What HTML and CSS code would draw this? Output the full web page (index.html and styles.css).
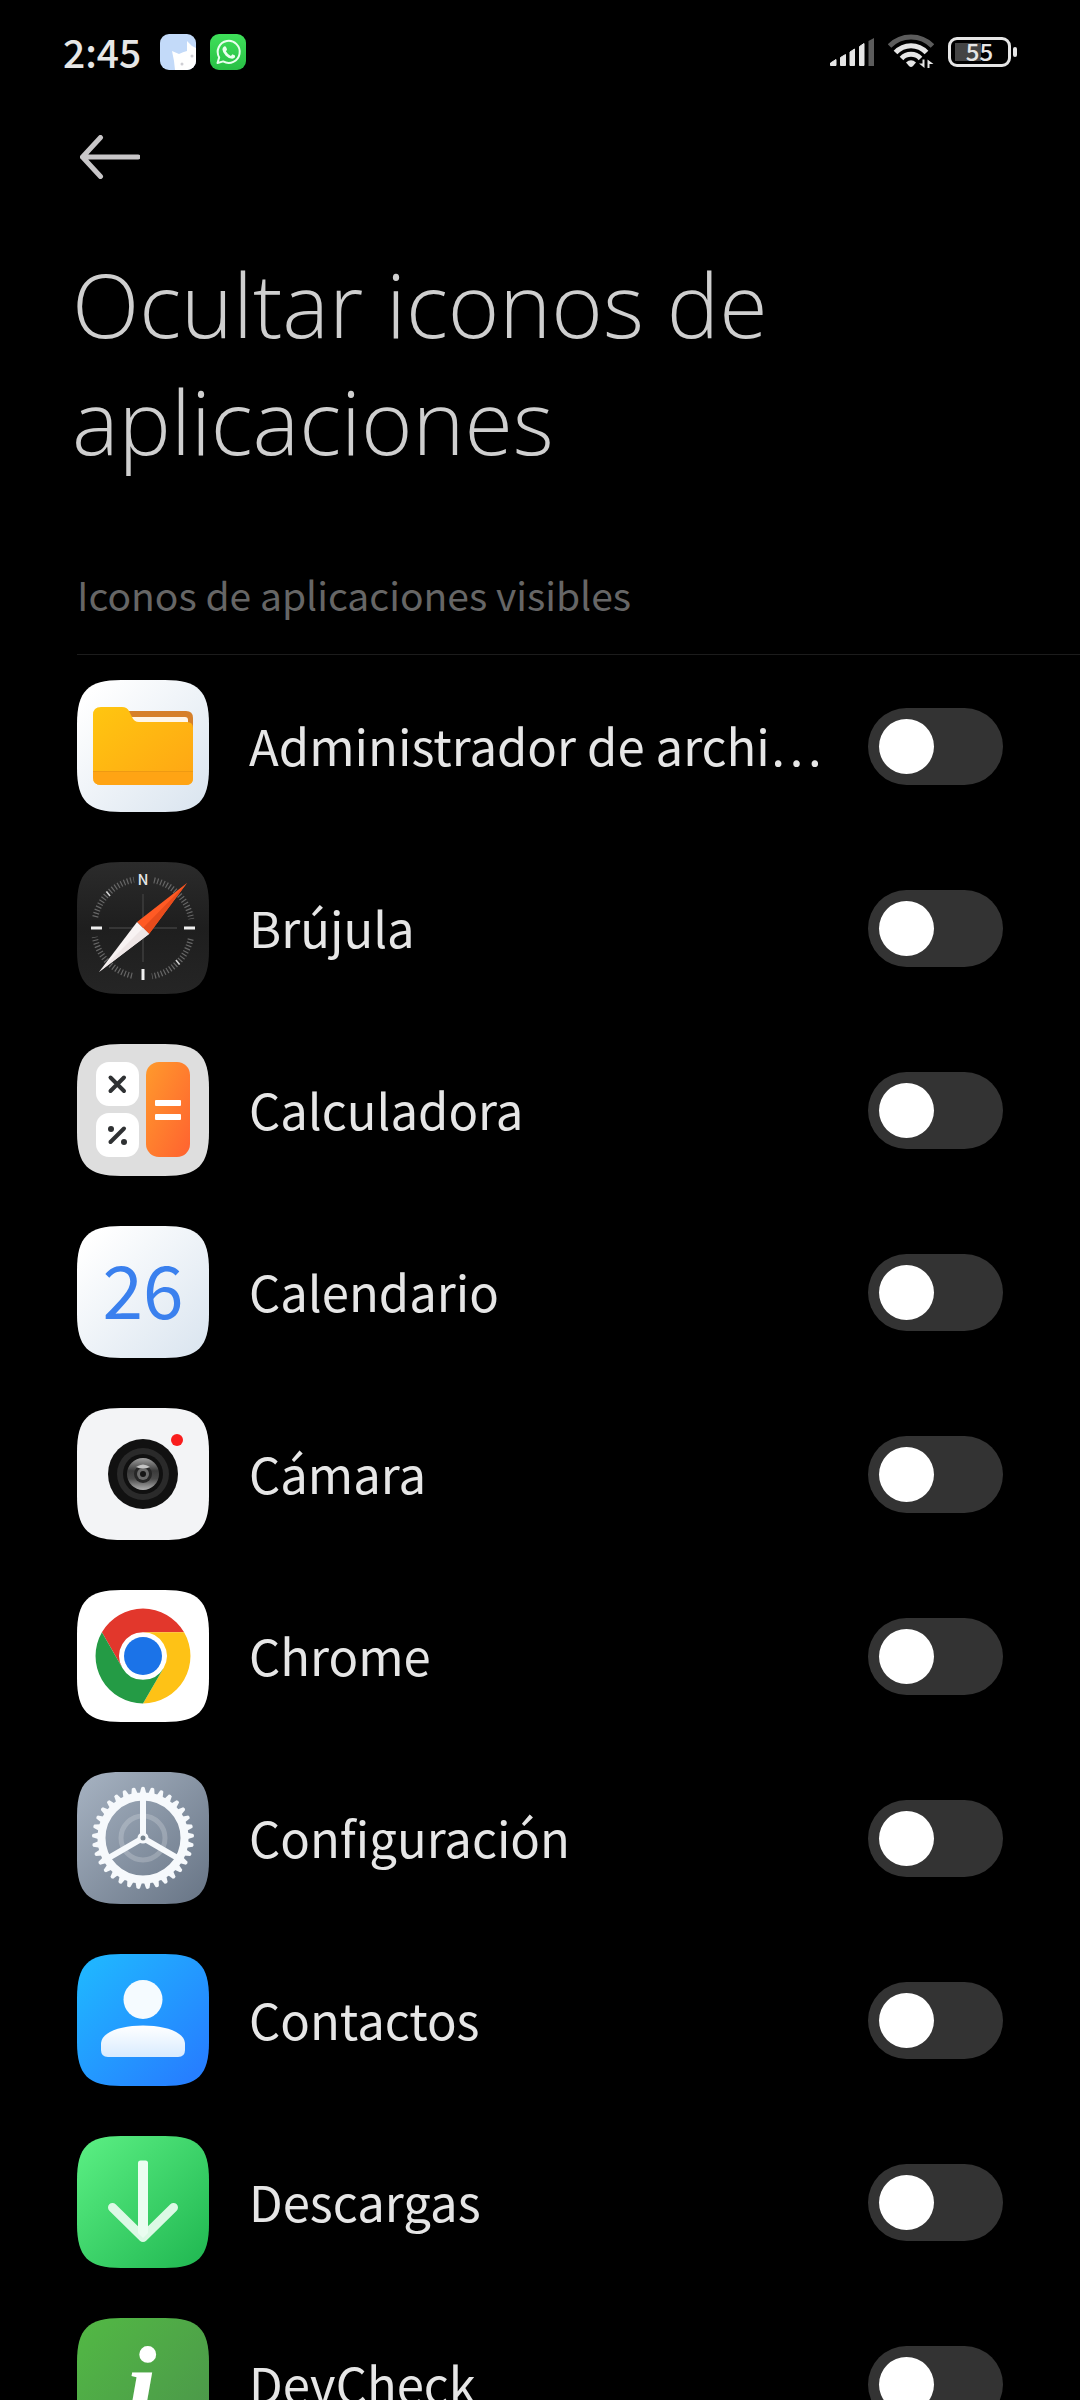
FILE: index.html
```html
<!DOCTYPE html>
<html lang="es">
<head>
    <meta charset="UTF-8">
    <meta name="viewport" content="width=device-width, initial-scale=1.0">
    <title>Ocultar iconos de aplicaciones</title>
    <link rel="stylesheet" href="styles.css">
</head>
<body>
    <!-- shared shapes -->
    <svg class="defs" width="0" height="0" aria-hidden="true">
        <defs>
            <path id="tile" d="M0 44C0 11 11 0 44 0H88C121 0 132 11 132 44V88C132 121 121 132 88 132H44C11 132 0 121 0 88Z"/>
            <linearGradient id="g-light" x1="0" y1="0" x2="1" y2="1">
                <stop offset="0.1" stop-color="#ffffff"/>
                <stop offset="1" stop-color="#d9e4ef"/>
            </linearGradient>
            <linearGradient id="g-folder" x1="0" y1="0" x2="1" y2="1">
                <stop offset="0" stop-color="#ffc610"/>
                <stop offset="1" stop-color="#ffa514"/>
            </linearGradient>
            <linearGradient id="g-dark" x1="0" y1="0" x2="0" y2="1">
                <stop offset="0" stop-color="#2b2b2b"/>
                <stop offset="0.5" stop-color="#1e1e1e"/>
                <stop offset="1" stop-color="#252525"/>
            </linearGradient>
            <linearGradient id="g-orange" x1="0" y1="0" x2="1" y2="1">
                <stop offset="0" stop-color="#ff9a2c"/>
                <stop offset="1" stop-color="#ff6230"/>
            </linearGradient>
            <linearGradient id="g-gray" x1="0" y1="0" x2="1" y2="1">
                <stop offset="0" stop-color="#a7b3c2"/>
                <stop offset="1" stop-color="#677485"/>
            </linearGradient>
            <linearGradient id="g-blue" x1="0" y1="0" x2="1" y2="1">
                <stop offset="0.1" stop-color="#20b4ff"/>
                <stop offset="0.9" stop-color="#267fff"/>
            </linearGradient>
            <linearGradient id="g-green" x1="0" y1="0" x2="1" y2="1">
                <stop offset="0" stop-color="#5cf084"/>
                <stop offset="1" stop-color="#1fb650"/>
            </linearGradient>
            <linearGradient id="g-dev" x1="0" y1="0" x2="1" y2="1">
                <stop offset="0" stop-color="#52b944"/>
                <stop offset="1" stop-color="#4b934b"/>
            </linearGradient>
            <linearGradient id="g-white" x1="0" y1="0" x2="0" y2="1">
                <stop offset="0" stop-color="#ffffff"/>
                <stop offset="1" stop-color="#d8ebff"/>
            </linearGradient>
            <linearGradient id="g-lens" x1="0" y1="0" x2="0" y2="1">
                <stop offset="0" stop-color="#a0a0a0"/>
                <stop offset="0.4" stop-color="#3a3a3a"/>
                <stop offset="0.65" stop-color="#4a4a4a"/>
                <stop offset="1" stop-color="#b0b0b0"/>
            </linearGradient>
            <linearGradient id="g-wa" x1="0" y1="0" x2="0" y2="1">
                <stop offset="0" stop-color="#3fe05a"/>
                <stop offset="1" stop-color="#28bf45"/>
            </linearGradient>
            <clipPath id="clip-note"><rect width="36" height="36" rx="9"/></clipPath>
            <path id="tooth" d="M62.600 22L64.300 15.500Q66 14.200 67.700 15.500L69.400 22Z"/>
            <g id="teeth">
                <use href="#tooth"/>
                <use href="#tooth" transform="rotate(10.909 66 66)"/>
                <use href="#tooth" transform="rotate(21.818 66 66)"/>
                <use href="#tooth" transform="rotate(32.727 66 66)"/>
                <use href="#tooth" transform="rotate(43.636 66 66)"/>
                <use href="#tooth" transform="rotate(54.545 66 66)"/>
                <use href="#tooth" transform="rotate(65.455 66 66)"/>
                <use href="#tooth" transform="rotate(76.364 66 66)"/>
                <use href="#tooth" transform="rotate(87.273 66 66)"/>
                <use href="#tooth" transform="rotate(98.182 66 66)"/>
                <use href="#tooth" transform="rotate(109.091 66 66)"/>
            </g>
        </defs>
    </svg>

    <div class="screen">
        <div class="status-bar">
            <div class="status-left">
                <span class="clock">2:45</span>
                <svg class="notification" viewBox="0 0 36 36">
                    <g clip-path="url(#clip-note)">
                        <rect width="36" height="36" fill="#c3daf9"/>
                        <path d="M15 36L14 27L12 17L19 20Q23 18 27 17L27 7L32 12L36 14V36Z" fill="#fff"/>
                        <circle cx="22" cy="30" r="1.500" fill="#cfcfd4"/>
                        <circle cx="32" cy="22" r="1.500" fill="#cfcfd4"/>
                    </g>
                </svg>
                <svg class="notification" viewBox="0 0 36 36">
                    <rect width="36" height="36" rx="9" fill="url(#g-wa)"/>
                    <path d="M7.500 29L9.200 23.400A11 11 0 1 1 13.200 27.400Z" fill="none" stroke="#e9ffee" stroke-width="2" stroke-linejoin="round"/>
                    <path d="M14 12.500Q15.300 11.600 16 13L17 15.300Q17 16.300 15.900 17.300Q17.600 20.600 20.900 21.900L22.400 20.300L25 21.600Q25.600 24.400 22.300 24.800Q19 24.900 15.800 21.700Q12.400 18.300 12.400 15.300Q12.600 13.400 14 12.500Z" fill="#e9ffee"/>
                </svg>
            </div>
            <div class="status-right">
                <svg class="signal" viewBox="0 0 44 28">
                    <g fill="#e6e6e6" stroke="#e6e6e6" stroke-linejoin="round">
                        <path d="M0.500 25L6 21.500V27.500H0.500Z"/>
                        <path d="M10.500 19.500L15.500 16.500V27.500H10.500Z"/>
                        <path d="M20 14L24.500 11V27.500H20Z"/>
                        <path d="M29.500 8.500L34 5.500V27.500H29.500Z"/>
                    </g>
                    <path d="M38.500 3L44 0V28H38.500Z" fill="#5c5c5c"/>
                </svg>
                <svg class="wifi" viewBox="0 0 46 36">
                    <g fill="none" stroke-width="5">
                        <path d="M1.500 12A30 30 0 0 1 44.500 12" stroke="#5c5c5c"/>
                        <path d="M7.500 18.500A21 21 0 0 1 38.500 18.500" stroke="#e6e6e6"/>
                        <path d="M13.500 24.500A13 13 0 0 1 32.500 24.500" stroke="#e6e6e6"/>
                    </g>
                    <path d="M18 28.500Q23 24 28 28.500L25 32Q23 34 21 32Z" fill="#e6e6e6"/>
                    <path d="M36.500 25.500V34L31 29.500H34.500V25.500ZM39.500 34V25.500L45.500 30H41.500V34Z" fill="#e6e6e6"/>
                </svg>
                <div class="battery">55</div>
            </div>
        </div>

        <div class="action-bar">
            <button class="back-button" aria-label="Atrás">
                <svg viewBox="0 0 60 44">
                    <path d="M20.500 2.500L2.500 22L20.500 41.500M2.500 22H58" fill="none" stroke="#c8c6c8" stroke-width="5" stroke-linecap="round" stroke-linejoin="round"/>
                </svg>
            </button>
        </div>

        <h1 class="page-title">Ocultar iconos de aplicaciones</h1>

        <h2 class="section-title">Iconos de aplicaciones visibles</h2>

        <div class="app-list">
            <label class="app-item">
                <svg class="app-icon" viewBox="0 0 132 132">
                    <use href="#tile" fill="url(#g-light)"/>
                    <path d="M50 31H109Q116 31 116 38V48H50Z" fill="#d6802a"/>
                    <path d="M54 37H108Q111 37 111 40V46H54Z" fill="#fff6e8"/>
                    <path d="M24 27H45Q50 27 52 31L55 37Q57 42 62 42H110Q116 42 116 48V98Q116 105 109 105H24Q16 105 16 97V35Q16 27 24 27Z" fill="url(#g-folder)"/>
                    <path d="M16 92H116V98Q116 105 109 105H24Q16 105 16 97Z" fill="#ffa414"/>
                    <path d="M16 91.500H116" stroke="#ef9a12" stroke-width="1"/>
                </svg>
                <span class="app-name">Administrador de archi…</span>
                <input class="switch" type="checkbox" role="switch">
            </label>
            <label class="app-item">
                <svg class="app-icon" viewBox="0 0 132 132">
                    <use href="#tile" fill="url(#g-dark)"/>
                    <path d="M32 66H100M66 32V100" stroke="#363636" stroke-width="2"/>
                    <g fill="none" stroke="#666" stroke-width="6">
                        <path id="arc" d="M77 18.300A49 49 0 0 1 114.300 57" stroke-dasharray="1.200 2.100"/>
                        <use href="#arc" transform="rotate(90 66 66)"/>
                        <use href="#arc" transform="rotate(180 66 66)"/>
                        <use href="#arc" transform="rotate(270 66 66)"/>
                    </g>
                    <path d="M14 66H25M107 66H118M66 107V118" stroke="#f0f0f0" stroke-width="3"/>
                    <path d="M29.500 29.500L33 34M99 98L102.500 102.500" stroke="#d0d0d0" stroke-width="1.500"/>
                    <text class="compass-north" x="66" y="23">N</text>
                    <path d="M110 21L60 60L72 72Z" fill="#ff5a24"/>
                    <path d="M110 21L66 66L72 72Z" fill="#e84c1c"/>
                    <path d="M22 110L60 60L72 72Z" fill="#f8f3f3"/>
                    <path d="M22 110L66 66L72 72Z" fill="#eee6e6"/>
                </svg>
                <span class="app-name">Brújula</span>
                <input class="switch" type="checkbox" role="switch">
            </label>
            <label class="app-item">
                <svg class="app-icon" viewBox="0 0 132 132">
                    <use href="#tile" fill="#dedede"/>
                    <rect x="19" y="18" width="43" height="44" rx="13" fill="#fff"/>
                    <rect x="19" y="69" width="43" height="44" rx="13" fill="#fff"/>
                    <rect x="69" y="18" width="44" height="95" rx="13" fill="url(#g-orange)"/>
                    <g stroke="#2f3133" stroke-width="4" stroke-linecap="round">
                        <path d="M33.500 33.500L47 47M47 33.500L33.500 47"/>
                        <path d="M47 84.500L33.500 98"/>
                    </g>
                    <circle cx="34" cy="85" r="3" fill="#2f3133"/>
                    <circle cx="47" cy="98" r="3" fill="#2f3133"/>
                    <rect x="78" y="56" width="26" height="6" rx="1" fill="#fff"/>
                    <rect x="78" y="70" width="26" height="6" rx="1" fill="#fff"/>
                </svg>
                <span class="app-name">Calculadora</span>
                <input class="switch" type="checkbox" role="switch">
            </label>
            <label class="app-item">
                <svg class="app-icon" viewBox="0 0 132 132">
                    <use href="#tile" fill="url(#g-light)"/>
                    <text class="calendar-day" x="66" y="93">26</text>
                </svg>
                <span class="app-name">Calendario</span>
                <input class="switch" type="checkbox" role="switch">
            </label>
            <label class="app-item">
                <svg class="app-icon" viewBox="0 0 132 132">
                    <use href="#tile" fill="#f3f4f6"/>
                    <circle cx="66" cy="66" r="35" fill="#111"/>
                    <circle cx="66" cy="66" r="26" fill="#2a2a2a"/>
                    <circle cx="66" cy="66" r="20" fill="#101010"/>
                    <circle cx="66" cy="66" r="16" fill="url(#g-lens)"/>
                    <circle cx="66" cy="66" r="9" fill="#262626"/>
                    <circle cx="66" cy="66" r="6" fill="#6a6a6a"/>
                    <circle cx="66" cy="66" r="3" fill="#151515"/>
                    <path d="M59 59Q66 54 73 59Q66 62 59 59Z" fill="#c4c4c4"/>
                    <circle cx="100" cy="32" r="6" fill="#f91d1d"/>
                </svg>
                <span class="app-name">Cámara</span>
                <input class="switch" type="checkbox" role="switch">
            </label>
            <label class="app-item">
                <svg class="app-icon" viewBox="0 0 132 132">
                    <use href="#tile" fill="#fff"/>
                    <path d="M24.900 42.250A47.500 47.500 0 0 1 107.100 42.250H66A23.750 23.750 0 0 0 45.400 77.900Z" fill="#e2372c"/>
                    <path d="M107.100 42.250A47.500 47.500 0 0 1 66 113.500L86.600 77.900A23.750 23.750 0 0 0 66 42.250Z" fill="#fec216"/>
                    <path d="M66 113.500A47.500 47.500 0 0 1 24.900 42.250L45.400 77.900A23.750 23.750 0 0 0 86.600 77.900Z" fill="#249b45"/>
                    <circle cx="66" cy="66" r="19" fill="#1b73e8"/>
                </svg>
                <span class="app-name">Chrome</span>
                <input class="switch" type="checkbox" role="switch">
            </label>
            <label class="app-item">
                <svg class="app-icon" viewBox="0 0 132 132">
                    <use href="#tile" fill="url(#g-gray)"/>
                    <circle cx="66" cy="66" r="22" fill="none" stroke="#fff" stroke-opacity="0.200" stroke-width="5"/>
                    <g fill="#f6f9fc">
                        <use href="#teeth"/>
                        <use href="#teeth" transform="rotate(120 66 66)"/>
                        <use href="#teeth" transform="rotate(240 66 66)"/>
                    </g>
                    <g fill="none" stroke="#f6f9fc">
                        <circle cx="66" cy="66" r="41.500" stroke-width="8"/>
                        <path d="M66 66V26M66 66L31.500 86M66 66L100.500 86" stroke-width="6"/>
                    </g>
                    <circle cx="66" cy="66" r="5.500" fill="#f6f9fc"/>
                    <circle cx="66" cy="66" r="2.500" fill="#77848f"/>
                </svg>
                <span class="app-name">Configuración</span>
                <input class="switch" type="checkbox" role="switch">
            </label>
            <label class="app-item">
                <svg class="app-icon" viewBox="0 0 132 132">
                    <use href="#tile" fill="url(#g-blue)"/>
                    <circle cx="66" cy="45.500" r="19.500" fill="#f5fbff"/>
                    <path d="M24 90C24 78 44 71.500 66 71.500S108 78 108 90V96Q108 103 101 103H31Q24 103 24 96Z" fill="url(#g-white)"/>
                </svg>
                <span class="app-name">Contactos</span>
                <input class="switch" type="checkbox" role="switch">
            </label>
            <label class="app-item">
                <svg class="app-icon" viewBox="0 0 132 132">
                    <use href="#tile" fill="url(#g-green)"/>
                    <path d="M35.500 71.500L66 101.500L96.500 71.500" fill="none" stroke="#dcf9e5" stroke-width="9" stroke-linecap="round" stroke-linejoin="round"/>
                    <path d="M61 27Q61 24.500 63.500 24.500H68.500Q71 24.500 71 27V97L66 102L61 97Z" fill="#eafdf0"/>
                </svg>
                <span class="app-name">Descargas</span>
                <input class="switch" type="checkbox" role="switch">
            </label>
            <label class="app-item">
                <svg class="app-icon" viewBox="0 0 132 132">
                    <use href="#tile" fill="url(#g-dev)"/>
                    <text class="info-mark" x="64" y="106">i</text>
                </svg>
                <span class="app-name">DevCheck</span>
                <input class="switch" type="checkbox" role="switch">
            </label>
        </div>
    </div>
</body>
</html>
```
FILE: styles.css
```css
* {
    box-sizing: border-box;
    margin: 0;
    padding: 0;
}
body {
    background-color: #000;
    color: #e6e6e6;
    font-family: 'Noto Sans CJK SC', 'Noto Sans', sans-serif;
}
.defs {
    position: absolute;
}
.screen {
    height: 100vh;
    overflow: hidden;
    display: flex;
    flex-direction: column;
}
.status-bar {
    flex: none;
    height: 104px;
    padding: 0 63px;
    display: flex;
    align-items: center;
    justify-content: space-between;
}
.status-left {
    display: flex;
    align-items: center;
    gap: 14px;
}
.clock {
    padding-bottom: 2px;
    font-size: 39px;
    font-weight: 500;
    line-height: 56px;
    margin-right: 5px;
}
.notification {
    width: 36px;
    height: 36px;
}
.status-right {
    display: flex;
    align-items: center;
    gap: 14px;
}
.signal {
    width: 44px;
    height: 28px;
}
.wifi {
    width: 46px;
    height: 36px;
}
.battery {
    position: relative;
    width: 63px;
    height: 30px;
    margin-right: 6px;
    border: 3px solid #e6e6e6;
    border-radius: 9px;
    font-size: 24px;
    font-weight: 500;
    line-height: 22px;
    text-align: center;
    background: linear-gradient(#444, #444) 4px center / 26px 18px no-repeat;
}
.battery::after {
    content: '';
    position: absolute;
    right: -9px;
    top: 7px;
    width: 4px;
    height: 10px;
    border-radius: 2px;
    background-color: #e6e6e6;
}
.action-bar {
    flex: none;
    height: 106px;
    padding: 0 80px;
    display: flex;
    align-items: center;
}
.back-button {
    width: 60px;
    height: 44px;
    border: none;
    background: none;
    cursor: pointer;
}
.back-button svg {
    display: block;
}
.page-title {
    margin-top: 36px;
    padding: 0 72px;
    max-width: 900px;
    font-family: 'Open Sans', sans-serif;
    font-size: 88px;
    font-weight: 300;
    line-height: 117px;
    color: #cfcfcf;
}
.section-title {
    margin-left: 77px;
    padding: 86px 0 32px;
    border-bottom: 1px solid #1c1c1c;
    font-size: 39px;
    font-weight: 400;
    line-height: 56px;
    color: #666;
}
.app-list {
    flex: 1;
    min-height: 0;
    overflow-y: auto;
    scrollbar-width: none;
}
.app-item {
    height: 182px;
    padding: 0 77px;
    display: flex;
    align-items: center;
    gap: 40px;
    cursor: pointer;
}
.app-icon {
    flex: none;
    width: 132px;
    height: 132px;
}
.app-name {
    flex: 1;
    min-width: 0;
    padding-bottom: 2px;
    font-size: 49px;
    line-height: 72px;
    white-space: nowrap;
    overflow: hidden;
    text-overflow: ellipsis;
}
.switch {
    appearance: none;
    flex: none;
    width: 135px;
    height: 77px;
    padding: 11px;
    border-radius: 39px;
    background-color: #333;
    cursor: pointer;
}
.switch::before {
    content: '';
    display: block;
    width: 55px;
    height: 55px;
    border-radius: 50%;
    background-color: #fff;
}
.switch:checked {
    background-color: #267fff;
}
.switch:checked::before {
    margin-left: auto;
}
.compass-north {
    font-size: 15px;
    font-weight: 500;
    text-anchor: middle;
    fill: #e6e6e6;
}
.calendar-day {
    font-size: 73px;
    font-weight: 400;
    text-anchor: middle;
    fill: #3a80ee;
}
.info-mark {
    font-family: 'Liberation Serif', serif;
    font-size: 112px;
    font-style: italic;
    font-weight: 700;
    text-anchor: middle;
    fill: #fff;
}
```
